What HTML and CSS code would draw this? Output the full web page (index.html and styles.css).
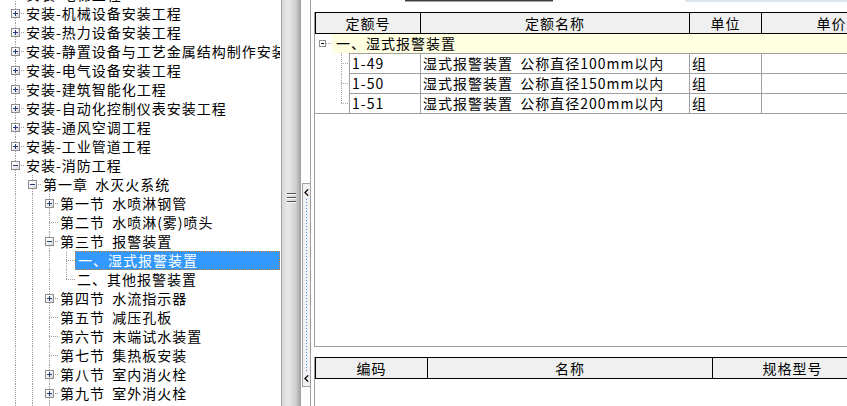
FILE: index.html
```html
<!DOCTYPE html>
<html lang="zh-CN">
<head>
  <meta charset="UTF-8" />
  <title>定额库</title>
  <link rel="stylesheet" href="styles.css">
</head>
<body>
  <div class="tree">
    <div class="tree-list">
      <div class="node"><span class="tw t"><i class="bx plus"></i></span><span class="lbl">安装-电梯工程</span></div>
      <div class="node"><span class="tw t"><i class="bx plus"></i></span><span class="lbl">安装-机械设备安装工程</span></div>
      <div class="node"><span class="tw t"><i class="bx plus"></i></span><span class="lbl">安装-热力设备安装工程</span></div>
      <div class="node"><span class="tw t"><i class="bx plus"></i></span><span class="lbl">安装-静置设备与工艺金属结构制作安装工程</span></div>
      <div class="node"><span class="tw t"><i class="bx plus"></i></span><span class="lbl">安装-电气设备安装工程</span></div>
      <div class="node"><span class="tw t"><i class="bx plus"></i></span><span class="lbl">安装-建筑智能化工程</span></div>
      <div class="node"><span class="tw t"><i class="bx plus"></i></span><span class="lbl">安装-自动化控制仪表安装工程</span></div>
      <div class="node"><span class="tw t"><i class="bx plus"></i></span><span class="lbl">安装-通风空调工程</span></div>
      <div class="node"><span class="tw t"><i class="bx plus"></i></span><span class="lbl">安装-工业管道工程</span></div>
      <div class="node"><span class="tw t"><i class="bx minus"></i></span><span class="lbl">安装-消防工程</span></div>
      <div class="node"><span class="tw i"></span><span class="tw t"><i class="bx minus"></i></span><span class="lbl">第一章 水灭火系统</span></div>
      <div class="node"><span class="tw i"></span><span class="tw i"></span><span class="tw t"><i class="bx plus"></i></span><span class="lbl">第一节 水喷淋钢管</span></div>
      <div class="node"><span class="tw i"></span><span class="tw i"></span><span class="tw t"></span><span class="lbl">第二节 水喷淋(雾)喷头</span></div>
      <div class="node"><span class="tw i"></span><span class="tw i"></span><span class="tw t"><i class="bx minus"></i></span><span class="lbl">第三节 报警装置</span></div>
      <div class="node"><span class="tw i"></span><span class="tw i"></span><span class="tw i"></span><span class="tw t"></span><span class="lbl sel">一、湿式报警装置</span></div>
      <div class="node"><span class="tw i"></span><span class="tw i"></span><span class="tw i"></span><span class="tw l"></span><span class="lbl">二、其他报警装置</span></div>
      <div class="node"><span class="tw i"></span><span class="tw i"></span><span class="tw t"><i class="bx plus"></i></span><span class="lbl">第四节 水流指示器</span></div>
      <div class="node"><span class="tw i"></span><span class="tw i"></span><span class="tw t"></span><span class="lbl">第五节 减压孔板</span></div>
      <div class="node"><span class="tw i"></span><span class="tw i"></span><span class="tw t"></span><span class="lbl">第六节 末端试水装置</span></div>
      <div class="node"><span class="tw i"></span><span class="tw i"></span><span class="tw t"></span><span class="lbl">第七节 集热板安装</span></div>
      <div class="node"><span class="tw i"></span><span class="tw i"></span><span class="tw t"><i class="bx plus"></i></span><span class="lbl">第八节 室内消火栓</span></div>
      <div class="node"><span class="tw i"></span><span class="tw i"></span><span class="tw t"><i class="bx plus"></i></span><span class="lbl">第九节 室外消火栓</span></div>
      <div class="node"><span class="tw i"></span><span class="tw i"></span><span class="tw t"><i class="bx plus"></i></span><span class="lbl">第十节 消防水泵接合器</span></div>
    </div>
  </div>

  <div class="splitter"><div class="grip"></div></div>

  <div class="strip">
    <div class="strip-box">
      <svg class="arrow" width="5" height="7" viewBox="0 0 5 7"><path d="M4.2 0.4 L1 3.5 L4.2 6.6" fill="none" stroke="#000" stroke-width="1.3"/></svg>
      <div class="strip-dots"></div>
      <svg class="arrow" width="5" height="7" viewBox="0 0 5 7"><path d="M4.2 0.4 L1 3.5 L4.2 6.6" fill="none" stroke="#000" stroke-width="1.3"/></svg>
    </div>
  </div>

  <div class="main">
    <div class="topbar">
      <div class="field"></div>
      <div class="search"></div>
    </div>

    <div class="grid">
      <div class="hd">
        <div class="h-code">定额号</div>
        <div class="h-name">定额名称</div>
        <div class="h-unit">单位</div>
        <div class="h-price">单价</div>
      </div>
      <div class="grp">
        <span class="gtw"><i class="gbx"></i></span>
        <span class="glbl">一、湿式报警装置</span>
      </div>
      <div class="row first">
        <span class="rt"></span>
        <div class="cell c-code">1-49</div>
        <div class="cell c-name">湿式报警装置 公称直径100mm以内</div>
        <div class="cell c-unit">组</div>
        <div class="cell c-price"></div>
      </div>
      <div class="row">
        <span class="rt"></span>
        <div class="cell c-code">1-50</div>
        <div class="cell c-name">湿式报警装置 公称直径150mm以内</div>
        <div class="cell c-unit">组</div>
        <div class="cell c-price"></div>
      </div>
      <div class="row last">
        <span class="rt"></span>
        <div class="cell c-code">1-51</div>
        <div class="cell c-name">湿式报警装置 公称直径200mm以内</div>
        <div class="cell c-unit">组</div>
        <div class="cell c-price"></div>
      </div>
    </div>

    <div class="sub-grid">
      <div class="hd">
        <div class="h-bcode">编码</div>
        <div class="h-bname">名称</div>
        <div class="h-bspec">规格型号</div>
      </div>
    </div>
  </div>
</body>
</html>
```

FILE: styles.css
```css
* {
  box-sizing: border-box;
}

html,
body {
  margin: 0;
  height: 100%;
}

body {
  font-family: "Noto Sans CJK SC", "Noto Sans", sans-serif;
  font-size: 14px;
  letter-spacing: 1px;
  word-spacing: 3px;
  color: #000;
  background: #fff;
  display: flex;
  overflow: hidden;
}

/* left tree */
.tree {
  width: 282px;
  flex: none;
  border-right: 1px solid #a0a0a0;
  overflow: hidden;
}

.tree-list {
  margin-top: -15px;
}

.node {
  display: flex;
  height: 19px;
  padding-left: 7px;
}

.tw {
  width: 17px;
  flex: none;
  display: flex;
  align-items: center;
  justify-content: center;
}

.tw.i {
  background: repeating-linear-gradient(to bottom, #a0a0a0 0 1px, transparent 1px 2px) 8px 0 / 1px 100% no-repeat;
}

.tw.t {
  background:
    repeating-linear-gradient(to bottom, #a0a0a0 0 1px, transparent 1px 2px) 8px 0 / 1px 100% no-repeat,
    repeating-linear-gradient(to right, #a0a0a0 0 1px, transparent 1px 2px) 8px 9px / 9px 1px no-repeat;
}

.tw.l {
  background:
    repeating-linear-gradient(to bottom, #a0a0a0 0 1px, transparent 1px 2px) 8px 0 / 1px 10px no-repeat,
    repeating-linear-gradient(to right, #a0a0a0 0 1px, transparent 1px 2px) 8px 9px / 9px 1px no-repeat;
}

.bx {
  width: 9px;
  height: 9px;
  border: 1px solid #8f8f8f;
}

.bx.plus {
  background:
    linear-gradient(#1f3c78, #1f3c78) center / 5px 1px no-repeat,
    linear-gradient(#1f3c78, #1f3c78) center / 1px 5px no-repeat,
    linear-gradient(135deg, #fff 30%, #d4d4d4);
}

.bx.minus {
  background:
    linear-gradient(#1f3c78, #1f3c78) center / 5px 1px no-repeat,
    linear-gradient(135deg, #fff 30%, #d4d4d4);
}

.lbl {
  flex: 1;
  min-width: 0;
  margin-right: 1px;
  padding-left: 2px;
  line-height: 19px;
  white-space: nowrap;
  overflow: hidden;
}

.lbl.sel {
  padding-left: 3px;
  background: #3399ff;
  color: #fff;
  outline: 1px dotted #c87a3a;
  outline-offset: -1px;
}

/* splitter + collapsed strip */
.splitter {
  width: 18px;
  flex: none;
  display: flex;
  align-items: center;
  justify-content: center;
  background: linear-gradient(to right, #d8d8d8, #e8e8e8 35%, #d2d2d2 75%, #a8a8a8);
}

.grip {
  width: 9px;
  height: 11px;
  margin-bottom: 10px;
  background: repeating-linear-gradient(to bottom, #505050 0 1px, #fafafa 1px 2px, transparent 2px 4px);
}

.strip {
  width: 11px;
  flex: none;
  border-left: 1px solid #a0a0a0;
  border-right: 1px solid #a0a0a0;
  padding: 183px 0 19px 1px;
  display: flex;
  flex-direction: column;
}

.strip-box {
  flex: 1;
  border: 1px solid #a0a0a0;
  border-right: none;
  background: #f2f2f2;
  display: flex;
  flex-direction: column;
  align-items: center;
  padding: 5px 0 4px;
}

.arrow {
  display: block;
  flex: none;
}

.strip-dots {
  flex: 1;
  width: 1px;
  margin: 3px 0;
  background: repeating-linear-gradient(to bottom, #3c96ff 0 1px, transparent 1px 3px);
}

/* right side */
.main {
  flex: 1;
  min-width: 0;
  display: flex;
  flex-direction: column;
  overflow: hidden;
}

.topbar {
  height: 12px;
  flex: none;
  display: flex;
}

.topbar .field {
  margin-left: 94px;
  width: 148px;
  height: 2px;
  background: linear-gradient(#3c3c3c 50%, #a8a8a8 50%);
}

.topbar .search {
  margin-left: 132px;
  flex: 1;
  height: 2px;
  background: #dfe6ee;
}

.grid {
  margin-left: 3px;
  height: 335px;
  flex: none;
  border-left: 1px solid #a0a0a0;
  border-bottom: 1px solid #a0a0a0;
  overflow: hidden;
}

.sub-grid {
  margin: 10px 0 0 3px;
  flex: 1;
  border-left: 1px solid #a0a0a0;
  overflow: hidden;
}

.hd {
  display: flex;
  height: 22px;
  border: 1px solid #000;
  border-right: none;
  background: #f0f0f0;
}

.hd > div {
  flex: none;
  border-right: 1px solid #000;
  text-align: center;
  line-height: 20px;
  white-space: nowrap;
}

.h-code { width: 105px; }
.h-name { width: 269px; }
.h-unit { width: 72px; }
.h-price { width: 140px; }

.h-bcode { width: 112px; }
.h-bname { width: 285px; }
.h-bspec { width: 160px; }

.grp {
  display: flex;
  height: 19px;
}

.gtw {
  width: 17px;
  flex: none;
  display: flex;
  align-items: center;
  padding-left: 4px;
  background: repeating-linear-gradient(to right, #a0a0a0 0 1px, transparent 1px 2px) 11px 9px / 6px 1px no-repeat;
}

.gbx {
  width: 7px;
  height: 7px;
  border: 1px solid #8f8f8f;
  background:
    linear-gradient(#000, #000) center / 3px 1px no-repeat,
    #fff;
}

.glbl {
  flex: 1;
  padding-left: 4px;
  line-height: 19px;
  background: #ffffe1;
  white-space: nowrap;
}

.row {
  display: flex;
}

.rt {
  width: 34px;
  flex: none;
  background:
    repeating-linear-gradient(to bottom, #a0a0a0 0 1px, transparent 1px 2px) 26px 0 / 1px 100% no-repeat,
    repeating-linear-gradient(to right, #a0a0a0 0 1px, transparent 1px 2px) 26px 9px / 8px 1px no-repeat;
}

.row.first .rt {
  background-position: 26px 0, 26px 10px;
}

.row.last .rt {
  border-bottom: 1px solid #a0a0a0;
  background-size: 1px 10px, 8px 1px;
}

.cell {
  flex: none;
  height: 20px;
  padding-left: 2px;
  line-height: 19px;
  border-right: 1px solid #a0a0a0;
  border-bottom: 1px solid #a0a0a0;
  white-space: nowrap;
  overflow: hidden;
}

.row.first .cell {
  height: 21px;
  border-top: 1px solid #a0a0a0;
}

.c-code {
  width: 72px;
  border-left: 1px solid #a0a0a0;
}

.c-name { width: 269px; }
.c-unit { width: 72px; }
.c-price { width: 140px; }
```
